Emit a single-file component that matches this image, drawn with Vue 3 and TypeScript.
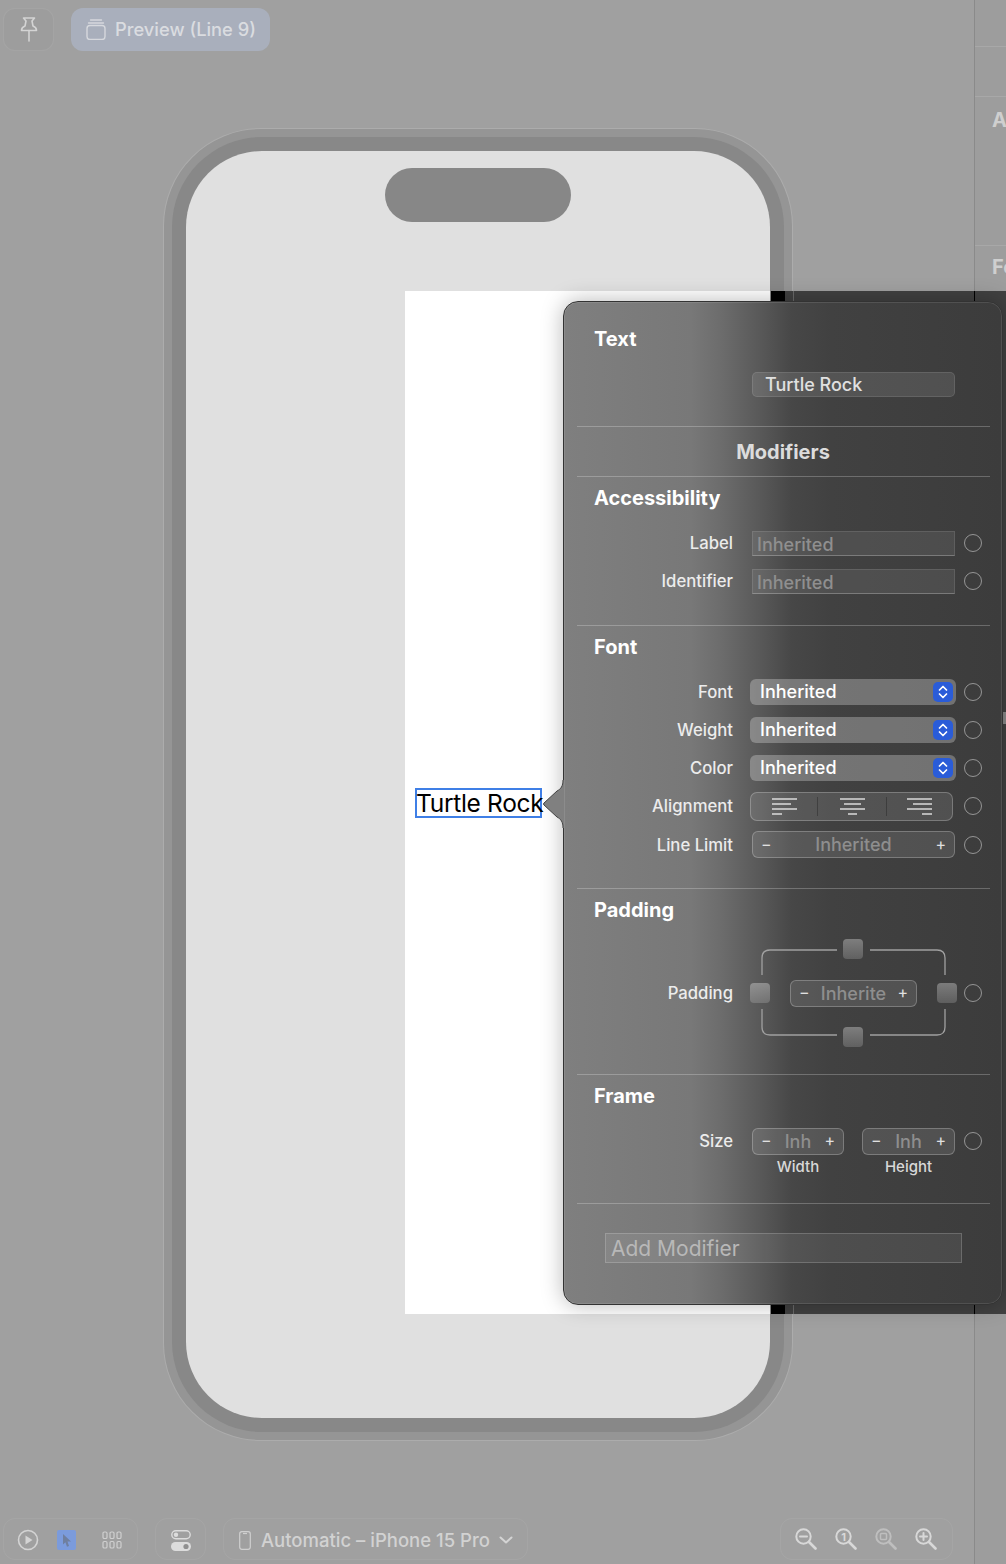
<script setup lang="ts">
const accessibilityRows = ['Label', 'Identifier']
const fontRows = ['Font', 'Weight', 'Color']
const alignLines = [
  { name: 'left', lines: ['M0 1H25', 'M0 6H19', 'M0 11H25', 'M0 16H10'] },
  { name: 'center', lines: ['M0 1H25', 'M4 6H21', 'M0 11H25', 'M8 16H17'] },
  { name: 'right', lines: ['M0 1H25', 'M6 6H25', 'M0 11H25', 'M15 16H25'] },
]
const zoomIcons = ['out', 'actual', 'fit', 'in']
</script>

<template>
  <div class="app">
    <main class="canvas">
      <header class="top-bar">
        <button type="button" class="pin-btn" aria-label="Pin">
          <svg width="18" height="25" viewBox="0 0 18 25" fill="none" stroke="#d4d4d4" stroke-width="1.6" stroke-linejoin="round" stroke-linecap="round">
            <path d="M3.5 1h11l-2.5 3 1 5c2 .8 3.5 2.3 3.5 4.5H1.5C1.5 11.3 3 9.8 5 9l1-5z" />
            <path d="M9 13.5V24" />
          </svg>
        </button>
        <button type="button" class="preview-btn">
          <svg width="20" height="21" viewBox="0 0 20 21" fill="none" stroke="#d6d8dd" stroke-width="1.4" stroke-linecap="round">
            <rect x="1" y="6.5" width="18" height="14" rx="3" />
            <path d="M2.5 4H17.5" />
            <path d="M4.5 1H15.5" />
          </svg>
          Preview (Line 9)
        </button>
      </header>

      <section class="stage">
        <div class="phone">
          <div class="bezel">
            <div class="screen">
              <div class="island"></div>
              <div class="preview-surface">
                <span class="selected-text">Turtle Rock</span>
              </div>
            </div>
          </div>
        </div>
      </section>

      <footer class="bottom-bar">
        <div class="group modes">
          <svg width="22" height="22" viewBox="0 0 22 22" fill="none" stroke="#d4d4d4" stroke-width="1.6">
            <circle cx="11" cy="11" r="9.5" />
            <path d="M8.5 6.5L15.5 11L8.5 15.5Z" fill="#d4d4d4" stroke="none" />
          </svg>
          <span class="cursor-mode">
            <svg width="12" height="15" viewBox="0 0 12 15"><path d="M2 1L10 8.5H6.5L8 13L6 13.8L4.4 9.3L2 11.5Z" fill="#6f7f9f" /></svg>
          </span>
          <svg width="20" height="18" viewBox="0 0 20 18" fill="none" stroke="#d0d0d0" stroke-width="1.2">
            <rect x="1" y="1" width="4" height="6.5" rx="1.3" />
            <rect x="8" y="1" width="4" height="6.5" rx="1.3" />
            <rect x="15" y="1" width="4" height="6.5" rx="1.3" />
            <rect x="1" y="10.5" width="4" height="6.5" rx="1.3" />
            <rect x="8" y="10.5" width="4" height="6.5" rx="1.3" />
            <rect x="15" y="10.5" width="4" height="6.5" rx="1.3" />
          </svg>
        </div>
        <div class="group toggles">
          <svg width="20" height="21" viewBox="0 0 20 21">
            <rect x=".8" y=".8" width="18.4" height="8" rx="4" fill="none" stroke="#dcdcdc" stroke-width="1.4" />
            <circle cx="5" cy="4.8" r="2.2" fill="#dcdcdc" />
            <rect y="12" width="20" height="9" rx="4.5" fill="#dcdcdc" />
            <circle cx="15" cy="16.5" r="2.6" fill="#8f8f8f" />
          </svg>
        </div>
        <div class="group device">
          <svg width="12" height="19" viewBox="0 0 12 19" fill="none" stroke="#cfcfcf" stroke-width="1.2">
            <rect x=".7" y=".7" width="10.6" height="17.6" rx="2.2" />
            <path d="M4 2.5H8" />
          </svg>
          <span>Automatic – iPhone 15 Pro</span>
          <svg class="chevron" width="14" height="8" viewBox="0 0 14 8" fill="none" stroke="#d4d4d4" stroke-width="2" stroke-linecap="round" stroke-linejoin="round">
            <path d="M1.5 1.5L7 6.5L12.5 1.5" />
          </svg>
        </div>
        <div class="group zooms">
          <svg
            v-for="icon in zoomIcons"
            :key="icon"
            :class="{ dim: icon === 'fit' }"
            width="22"
            height="22"
            viewBox="0 0 22 22"
            fill="none"
            stroke="#d8d8d8"
            stroke-width="2"
            stroke-linecap="round"
          >
            <circle cx="8.5" cy="8.5" r="7.2" />
            <path d="M14 14L20.5 20.5" stroke-width="2.6" />
            <path v-if="icon === 'out'" d="M5 8.5H12" />
            <text v-if="icon === 'actual'" x="8.5" y="12.5" class="zoom-one">1</text>
            <rect v-if="icon === 'fit'" x="5.5" y="5.5" width="6" height="6" rx="1" stroke-width="1.5" />
            <path v-if="icon === 'in'" d="M5 8.5H12M8.5 5V12" />
          </svg>
        </div>
      </footer>
    </main>

    <aside class="sidebar">
      <div class="side-block side-a"></div>
      <div class="side-block side-b"></div>
      <div class="side-block side-c">Accessibility</div>
      <div class="side-block side-d">Font</div>
    </aside>

    <div class="dark-strip">
      <span class="strip-black"></span>
      <span class="strip-edge"></span>
      <span class="strip-rule"></span>
      <span class="strip-thumb"></span>
    </div>

    <div class="popover">
      <svg class="arrow" width="22" height="48" viewBox="0 0 22 48">
        <path d="M22 0H21C21 6 19 9 15 11L2 23Q1 24 2 25L15 37C19 39 21 42 21 48H22Z" fill="#808080" />
        <path d="M21 0C21 6 19 9 15 11L2 23Q1 24 2 25L15 37C19 39 21 42 21 48" fill="none" stroke="#444" stroke-width="1" />
      </svg>

      <section class="sec sec-text">
        <h3>Text</h3>
        <div class="row first-row">
          <span class="lab"></span>
          <div class="text-field">Turtle Rock</div>
        </div>
      </section>
      <hr />

      <div class="modifiers-title">Modifiers</div>
      <hr />

      <section class="sec sec-access">
        <h3>Accessibility</h3>
        <div class="rows">
          <div v-for="name in accessibilityRows" :key="name" class="row">
            <span class="lab">{{ name }}</span>
            <div class="plain-field">Inherited</div>
            <i class="dot"></i>
          </div>
        </div>
      </section>
      <hr />

      <section class="sec sec-font">
        <h3>Font</h3>
        <div class="rows">
          <div v-for="name in fontRows" :key="name" class="row">
            <span class="lab">{{ name }}</span>
            <div class="select">
              Inherited
              <span class="select-caret">
                <svg width="10" height="14" viewBox="0 0 10 14" fill="none" stroke="#fff" stroke-width="1.7" stroke-linecap="round" stroke-linejoin="round">
                  <path d="M1.5 5L5 1.5L8.5 5" />
                  <path d="M1.5 9L5 12.5L8.5 9" />
                </svg>
              </span>
            </div>
            <i class="dot"></i>
          </div>
          <div class="row">
            <span class="lab">Alignment</span>
            <div class="segments">
              <span v-for="seg in alignLines" :key="seg.name" class="segment">
                <svg width="25" height="17" viewBox="0 0 25 17" fill="none" stroke="#f0f0f0" stroke-width="1.3">
                  <path v-for="line in seg.lines" :key="line" :d="line" />
                </svg>
              </span>
            </div>
            <i class="dot"></i>
          </div>
          <div class="row">
            <span class="lab">Line Limit</span>
            <div class="stepper">
              <span class="sign">−</span>
              <span class="value">Inherited</span>
              <span class="sign">+</span>
            </div>
            <i class="dot"></i>
          </div>
        </div>
      </section>
      <hr />

      <section class="sec sec-padding">
        <h3>Padding</h3>
        <div class="row padding-row">
          <span class="lab">Padding</span>
          <div class="padding-box">
            <svg class="bracket" width="207" height="108" viewBox="0 0 207 108" fill="none" stroke="#a0a0a0" stroke-width="1.3">
              <path d="M12 36V19Q12 11 20 11H87" />
              <path d="M120 11H187Q195 11 195 19V36" />
              <path d="M12 70V88Q12 96 20 96H87" />
              <path d="M120 96H187Q195 96 195 88V70" />
            </svg>
            <span class="knob k-top"></span>
            <span class="knob k-left"></span>
            <div class="stepper small">
              <span class="sign">−</span>
              <span class="value">Inherite</span>
              <span class="sign">+</span>
            </div>
            <span class="knob k-right"></span>
            <span class="knob k-bottom"></span>
          </div>
          <i class="dot padding-dot"></i>
        </div>
      </section>
      <hr />

      <section class="sec sec-frame">
        <h3>Frame</h3>
        <div class="row size-row">
          <span class="lab">Size</span>
          <div class="size-steppers">
            <div class="stepper">
              <span class="sign">−</span>
              <span class="value">Inh</span>
              <span class="sign">+</span>
            </div>
            <div class="stepper">
              <span class="sign">−</span>
              <span class="value">Inh</span>
              <span class="sign">+</span>
            </div>
          </div>
          <i class="dot"></i>
        </div>
        <div class="captions">
          <span>Width</span>
          <span>Height</span>
        </div>
      </section>
      <hr />

      <div class="add-modifier">Add Modifier</div>
    </div>
  </div>
</template>

<style>
html,
body {
  margin: 0;
  background: #a0a0a0;
}
</style>

<style scoped>
.app {
  position: relative;
  display: grid;
  grid-template-columns: 974px 32px;
  width: 1006px;
  height: 1564px;
  overflow: hidden;
  background: #a0a0a0;
  font-family: Inter, "Liberation Sans", sans-serif;
}

.canvas {
  display: flex;
  flex-direction: column;
  height: 1564px;
}

.top-bar {
  display: flex;
  align-items: center;
  gap: 17px;
  height: 43px;
  padding: 8px 0 0 3px;
}

.top-bar button {
  height: 43px;
  border-radius: 12px;
  padding: 0;
  box-sizing: border-box;
  font-family: inherit;
}

.pin-btn {
  display: grid;
  place-items: center;
  width: 51px;
  border: 1px solid rgba(255, 255, 255, 0.07);
  background: rgba(0, 0, 0, 0.015);
}

.top-bar .preview-btn {
  display: flex;
  align-items: center;
  gap: 9px;
  width: 199px;
  padding: 0 0 1px 15px;
  border: 0;
  background: #a9afbc;
  color: #dadce0;
  font-size: 18.3px;
  font-weight: 500;
}

.stage {
  flex: 1;
  padding: 77px 0 0 163px;
}

.phone {
  box-sizing: border-box;
  width: 630px;
  height: 1313px;
  padding: 8px;
  border: 1px solid rgba(255, 255, 255, 0.22);
  border-radius: 98px;
  background: #959595;
}

.bezel {
  height: 100%;
  box-sizing: border-box;
  padding: 14px;
  border-radius: 90px;
  background: #888;
}

.screen {
  position: relative;
  height: 100%;
  padding-top: 17px;
  box-sizing: border-box;
  border-radius: 76px;
  background: #e0e0e0;
}

.island {
  width: 186px;
  height: 54px;
  margin: 0 auto;
  border-radius: 27px;
  background: #878787;
}

.preview-surface {
  position: absolute;
  left: 219px;
  right: 0;
  top: 140px;
  bottom: 104px;
  background: #fff;
}

.selected-text {
  position: absolute;
  left: 10px;
  top: 497px;
  box-sizing: border-box;
  width: 127px;
  height: 30px;
  border: 2px solid #3f7fe6;
  color: #000;
  font-size: 24.5px;
  letter-spacing: -0.3px;
  line-height: 27px;
  white-space: nowrap;
  text-indent: -1px;
}

.bottom-bar {
  display: flex;
  gap: 17px;
  height: 42px;
  margin: 0 0 4px 3px;
}

.group {
  display: flex;
  align-items: center;
  box-sizing: border-box;
  height: 42px;
  border: 1px solid rgba(255, 255, 255, 0.06);
  border-radius: 12px;
}

.modes {
  gap: 18px;
  width: 135px;
  padding: 2px 0 0 13px;
}

.cursor-mode {
  display: grid;
  place-items: center;
  width: 19px;
  height: 20px;
  border-radius: 2px;
  background: #7b9bdc;
}

.modes > svg:last-child {
  margin-left: 8px;
}

.toggles {
  justify-content: center;
  width: 51px;
  padding-top: 2px;
}

.device {
  width: 305px;
  padding: 2px 0 0 15px;
  gap: 10px;
  color: #d2d2d2;
  font-size: 18.5px;
  font-weight: 500;
  white-space: nowrap;
}

.chevron {
  margin-left: -1px;
}

.zooms {
  gap: 18px;
  width: 173px;
  margin-left: 235px;
  padding-left: 14px;
}

.zooms .dim {
  opacity: 0.55;
}

.zoom-one {
  fill: #d8d8d8;
  stroke: none;
  font-size: 11px;
  font-weight: 700;
  text-anchor: middle;
}

.sidebar {
  box-sizing: border-box;
  border-left: 1px solid #8a8a8a;
  background: #9d9d9d;
  overflow: hidden;
  color: #cfcfcf;
  font-size: 20px;
  font-weight: 700;
  white-space: nowrap;
}

.side-block {
  box-sizing: border-box;
  padding-left: 17px;
  border-bottom: 1px solid rgba(255, 255, 255, 0.12);
}

.side-a {
  height: 47px;
}

.side-b {
  height: 50px;
}

.side-c {
  height: 149px;
  padding-top: 11px;
}

.side-d {
  padding-top: 9px;
  border-bottom: 0;
}

.dark-strip {
  position: absolute;
  left: 771px;
  right: 0;
  top: 291px;
  height: 1023px;
  background: #414141;
}

.dark-strip span {
  position: absolute;
  top: 0;
  bottom: 0;
}

.strip-black {
  left: 0;
  width: 14px;
  background: #000;
}

.strip-edge {
  left: 22px;
  width: 1px;
  background: #6a6a6a;
}

.strip-rule {
  left: 203px;
  width: 1px;
  background: #000;
}

.dark-strip .strip-thumb {
  left: 232px;
  top: 421px;
  bottom: auto;
  width: 3px;
  height: 12px;
  background: #8a8a8a;
}

.popover {
  position: absolute;
  left: 563px;
  top: 301px;
  box-sizing: border-box;
  width: 440px;
  height: 1004px;
  border: 1px solid #333;
  border-radius: 15px;
  background: linear-gradient(90deg, #7f7f7f 0%, #787878 29%, #6c6c6c 36%, #585858 45%, #474747 52%, #414141 61%, #3c3c3c 100%);
  box-shadow: 0 0 22px rgba(0, 0, 0, 0.28), inset 0 0 0 1px rgba(255, 255, 255, 0.1);
  color: #ececec;
  font-size: 16.7px;
  font-weight: 500;
}

.arrow {
  position: absolute;
  left: -22px;
  top: 478px;
}

.popover hr {
  width: 413px;
  height: 1px;
  margin: 0 0 0 13px;
  border: 0;
  background: rgba(255, 255, 255, 0.24);
}

.sec {
  box-sizing: border-box;
  padding-top: 9px;
}

.sec h3 {
  height: 24px;
  margin: 0 0 0 30px;
  color: #fff;
  font-size: 20px;
  font-weight: 700;
  line-height: 24px;
}

.sec-text {
  height: 124px;
  padding-top: 25px;
}

.sec-access {
  height: 148px;
}

.sec-access .rows {
  margin-top: 14px;
}

.sec-font {
  height: 262px;
}

.sec-padding {
  height: 185px;
}

.sec-frame {
  height: 128px;
}

.sec-text .first-row {
  margin-top: 14.5px;
}

.rows {
  margin-top: 13.5px;
}

.row {
  display: flex;
  align-items: center;
  height: 38.25px;
}

.lab {
  flex: none;
  width: 169px;
  margin-right: 19px;
  text-align: right;
  white-space: nowrap;
}

.dot {
  flex: none;
  box-sizing: border-box;
  width: 18px;
  height: 18px;
  margin-left: 9px;
  border: 1.5px solid rgba(255, 255, 255, 0.45);
  border-radius: 50%;
}

.modifiers-title {
  height: 49px;
  color: #dcdcdc;
  font-size: 20px;
  font-weight: 700;
  line-height: 50px;
  text-align: center;
}

.text-field {
  box-sizing: border-box;
  width: 203px;
  height: 25px;
  padding-left: 12px;
  border: 1px solid rgba(255, 255, 255, 0.1);
  border-radius: 5px;
  background: rgba(255, 255, 255, 0.1);
  color: #e0e0e0;
  font-size: 18px;
  line-height: 23px;
}

.plain-field {
  box-sizing: border-box;
  width: 203px;
  height: 25px;
  padding-left: 4px;
  border: 1px solid rgba(255, 255, 255, 0.1);
  border-bottom-color: rgba(255, 255, 255, 0.25);
  background: rgba(255, 255, 255, 0.08);
  color: #8f8f8f;
  font-size: 18px;
  line-height: 26px;
}

.select {
  position: relative;
  box-sizing: border-box;
  width: 206px;
  height: 26px;
  margin: 0 -1px 0 -2px;
  padding-left: 10px;
  border-radius: 6px;
  background: rgba(255, 255, 255, 0.27);
  color: #fff;
  font-size: 18px;
  line-height: 26px;
}

.select-caret {
  position: absolute;
  right: 3px;
  top: 3px;
  display: grid;
  place-items: center;
  width: 20px;
  height: 20px;
  border-radius: 5px;
  background: #2a5cd8;
}

.segments {
  display: grid;
  grid-template-columns: 66px 69px 66px;
  box-sizing: border-box;
  width: 203px;
  height: 29px;
  margin: 0 2px 0 -2px;
  border: 1px solid rgba(255, 255, 255, 0.24);
  border-radius: 7px;
  background: rgba(255, 255, 255, 0.1);
}

.segment {
  display: grid;
  place-items: center;
  margin: 4px 0;
  border-left: 1px solid rgba(0, 0, 0, 0.25);
}

.segment:first-child {
  border-left: 0;
}

.stepper {
  display: flex;
  align-items: center;
  justify-content: space-between;
  box-sizing: border-box;
  width: 203px;
  height: 27px;
  padding: 0 8px;
  border: 1px solid rgba(255, 255, 255, 0.24);
  border-radius: 6px;
  background: rgba(255, 255, 255, 0.1);
  font-size: 18px;
}

.stepper .value {
  color: #8e8e8e;
}

.stepper .sign {
  margin-top: -2px;
  color: #e0e0e0;
  font-size: 16px;
  font-weight: 400;
}

.padding-row {
  height: 108px;
  margin-top: 17px;
}

.padding-row .lab {
  margin-right: 17px;
}

.padding-box {
  position: relative;
  display: grid;
  flex: none;
  grid-template-columns: 20px 1fr 20px;
  grid-template-rows: 20px 1fr 20px;
  place-items: center;
  width: 207px;
  height: 108px;
}

.bracket {
  position: absolute;
  inset: 0;
}

.knob {
  position: relative;
  width: 20px;
  height: 20px;
  border-radius: 4px;
  background: linear-gradient(rgba(255, 255, 255, 0.32), rgba(255, 255, 255, 0.17));
}

.k-top {
  grid-area: 1 / 2;
  margin-right: 1px;
}

.k-left {
  grid-area: 2 / 1;
}

.k-right {
  grid-area: 2 / 3;
}

.k-bottom {
  grid-area: 3 / 2;
  margin-right: 1px;
}

.stepper.small {
  position: relative;
  grid-area: 2 / 2;
  width: 127px;
}

.padding-dot {
  margin-left: 7px;
}

.size-row {
  margin-top: 14px;
}

.size-steppers {
  display: grid;
  grid-template-columns: 92px 93px;
  gap: 18px;
  width: 203px;
}

.size-steppers .stepper {
  width: auto;
}

.captions {
  display: grid;
  grid-template-columns: 92px 93px;
  gap: 18px;
  width: 203px;
  margin: -2px 0 0 188px;
  color: #d8d8d8;
  font-size: 15px;
  line-height: 18px;
  text-align: center;
}

.add-modifier {
  box-sizing: border-box;
  width: 357px;
  height: 30px;
  margin: 29px 0 0 41px;
  padding-left: 5px;
  border: 1px solid rgba(255, 255, 255, 0.18);
  background: rgba(255, 255, 255, 0.07);
  color: #b8b8b8;
  font-size: 21px;
  font-weight: 400;
  line-height: 30px;
}
</style>
